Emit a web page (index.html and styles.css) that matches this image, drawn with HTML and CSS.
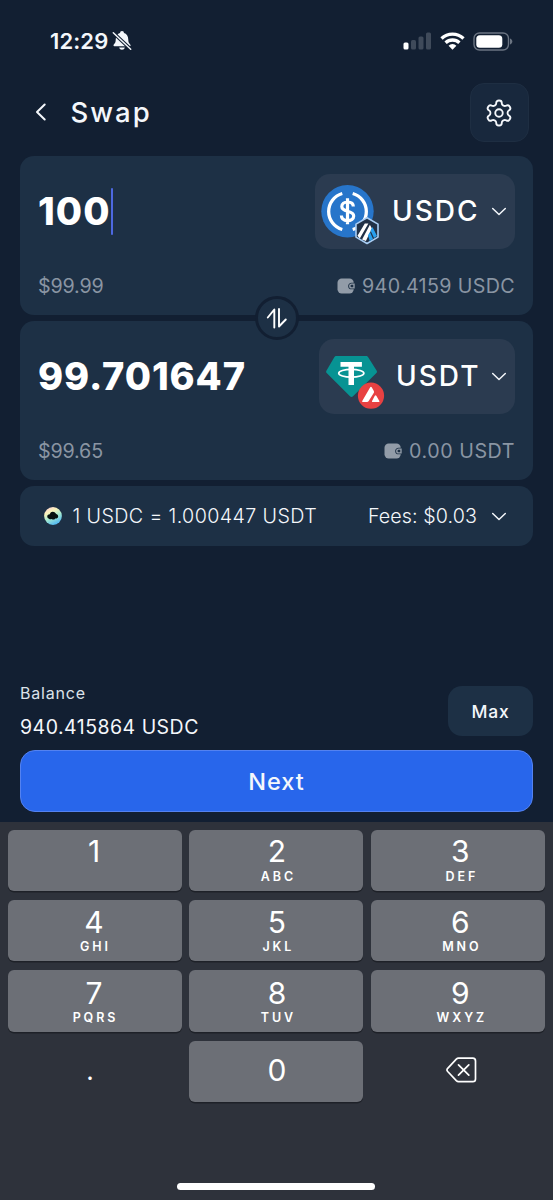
FILE: index.html
```html
<!DOCTYPE html>
<html lang="en">
<head>
<meta charset="utf-8">
<title>Swap</title>
<link rel="stylesheet" href="styles.css">
</head>
<body>
<div class="status">
  <span class="time">12:29</span>
  <svg class="bell" width="20" height="20" viewBox="0 0 20 20"><path d="M1.500 14.500c0-1.400 2.200-2 2.200-5.500C3.700 5 5.500 2.700 8 2.100a2 2 0 0 1 4 0C14.500 2.700 16.300 5 16.300 9c0 3.500 2.300 4.100 2.300 5.500 0 .5-.3.800-.8.800H2.300c-.5 0-.8-.3-.8-.8zM7.200 16.500h5.600c-.3 1.500-1.400 2.200-2.800 2.200s-2.500-.7-2.800-2.200z" fill="#f4f7fb"/><path d="M1 1.500 19 18.500" stroke="#121f32" stroke-width="3.600"/><path d="M1.300 1.800 18.700 18.200" stroke="#f4f7fb" stroke-width="1.500" stroke-linecap="round"/></svg>
  <div class="radios">
    <svg width="29" height="18" viewBox="0 0 29 18"><rect x="0.500" y="10.500" width="5" height="7" rx="1.500" fill="#fff"/><g fill="#3f4a5a"><rect x="8" y="8" width="5" height="9.500" rx="1.500"/><rect x="15.500" y="4.500" width="5" height="13" rx="1.500"/><rect x="23" y="0.500" width="5" height="17" rx="1.500"/></g></svg>
    <svg width="25" height="18" viewBox="0 0 25 18"><g fill="none" stroke="#fff" stroke-width="3.300"><path d="M1.500 6.500a15.800 15.800 0 0 1 22 0"/><path d="M5.600 10.800a9.900 9.900 0 0 1 13.800 0"/></g><path d="M12.500 17.700 8.600 13.700a5.600 5.600 0 0 1 7.800 0z" fill="#fff"/></svg>
    <svg width="40" height="19" viewBox="0 0 40 19"><rect x="1" y="1" width="34.500" height="17" rx="5.500" fill="none" stroke="#6b7482" stroke-width="1.400"/><rect x="3.300" y="3.300" width="26" height="12.400" rx="3.500" fill="#fff"/><path d="M37 6.500c1.500.5 2.300 1.600 2.300 3s-.8 2.500-2.300 3z" fill="#6b7482"/></svg>
  </div>
</div>
<header class="header">
  <svg class="back" width="12" height="18" viewBox="0 0 12 18"><path d="M9.700 1.500 2 9l7.700 7.500" fill="none" stroke="#f4f7fb" stroke-width="2" stroke-linecap="round" stroke-linejoin="round"/></svg>
  <h1 class="title">Swap</h1>
  <button class="settings"><svg width="30" height="30" viewBox="0 0 24 24" fill="none" stroke="#f4f7fb" stroke-width="1.500"><path d="M12.220 2h-.44a2 2 0 0 0-2 2v.18a2 2 0 0 1-1 1.730l-.43.25a2 2 0 0 1-2 0l-.15-.08a2 2 0 0 0-2.730.73l-.22.38a2 2 0 0 0 .73 2.730l.15.1a2 2 0 0 1 1 1.720v.51a2 2 0 0 1-1 1.740l-.15.09a2 2 0 0 0-.73 2.730l.22.38a2 2 0 0 0 2.730.73l.15-.08a2 2 0 0 1 2 0l.43.25a2 2 0 0 1 1 1.730V20a2 2 0 0 0 2 2h.44a2 2 0 0 0 2-2v-.18a2 2 0 0 1 1-1.730l.43-.25a2 2 0 0 1 2 0l.15.08a2 2 0 0 0 2.730-.73l.22-.39a2 2 0 0 0-.73-2.730l-.15-.08a2 2 0 0 1-1-1.740v-.5a2 2 0 0 1 1-1.740l.15-.09a2 2 0 0 0 .73-2.730l-.22-.38a2 2 0 0 0-2.730-.73l-.15.08a2 2 0 0 1-2 0l-.43-.25a2 2 0 0 1-1-1.730V4a2 2 0 0 0-2-2z"/><circle cx="12" cy="12" r="3"/></svg></button>
</header>
<main class="main">
  <section class="card">
    <div class="card-top">
      <div class="amount amount-in">100<span class="caret"></span></div>
      <button class="token token-usdc">
        <svg class="coin" width="60" height="62" viewBox="0 0 60 62">
          <circle cx="26.500" cy="26.200" r="26.200" fill="#2775ca"/>
          <g fill="none" stroke="#fff"><path d="M21.300 8.500a18.700 18.700 0 0 0 0 36M31.700 8.500a18.700 18.700 0 0 1 0 36" stroke-width="3.300"/><path d="M26.500 13.300v26M32.300 21.600c0-3-2.400-4.600-5.700-4.600-3.400 0-5.800 1.700-5.800 4.500 0 6.300 11.900 3.300 11.900 9.600 0 2.800-2.600 4.500-6.100 4.500-3.700 0-6.200-1.800-6.200-5" stroke-width="3.200"/></g>
          <path d="m46 32.800 11 6.300v13l-11 6.400-11-6.400v-13z" fill="#213147" stroke="#a9cdf3" stroke-width="1.600" stroke-linejoin="round"/>
          <path d="m36.500 50.800 7.300-12.300h3.600L38.800 53.500zm4.600 3.700 7.800-14.700 2 3.800-6 12.300z" fill="#fff"/>
          <path d="m49.500 45.500 2-3.400 4.500 9-3 2zM47 50.300l2-3.400 3 7.200-3.300 1.800z" fill="#28a0f0"/>
        </svg>
        <span class="symbol symbol-usdc">USDC</span>
        <svg class="chev" width="16" height="9" viewBox="0 0 16 9"><path d="m1.700 1.500 6.300 6 6.300-6"/></svg>
      </button>
    </div>
    <div class="card-bottom">
      <span class="fiat">$99.99</span>
      <span class="held"><svg width="18" height="16" viewBox="0 0 18 16"><rect x=".5" y=".5" width="16.200" height="15" rx="4.200"/><path class="clasp" d="M18.500 5.400h-4a2.600 2.600 0 0 0 0 5.200h4"/><path class="flap" d="M17 6.100h-2.300a1.900 1.900 0 0 0 0 3.800H17z"/></svg><span class="held-usdc">940.4159 USDC</span></span>
    </div>
    <button class="flip"><svg width="22" height="22" viewBox="0 0 22 22"><path d="m1.800 10.500 6.500-8v18M13 2v17.500l6.800-7" fill="none" stroke="#fff" stroke-width="1.900" stroke-linejoin="round" stroke-linecap="round"/></svg></button>
  </section>
  <section class="card">
    <div class="card-top">
      <div class="amount amount-out">99.701647</div>
      <button class="token token-usdt">
        <svg class="coin" width="60" height="62" viewBox="0 0 60 62">
          <path d="M11.500 6h29.500c1 0 1.700.3 2.200 1.200l8.500 13.500c.5.900.4 1.700-.3 2.400L28 46.300c-1 .9-2 .9-3 0L1.700 23.100c-.7-.7-.8-1.500-.3-2.400l7.900-13.500C9.800 6.300 10.500 6 11.500 6z" fill="#079393"/>
          <path d="M15.500 12h21.400v4.700H29v18.200h-5.500V16.700h-8z" fill="#fff"/><ellipse cx="26.300" cy="23.300" rx="12.600" ry="3.900" fill="none" stroke="#fff" stroke-width="1.700"/>
          <circle cx="46" cy="45.700" r="13.100" fill="#e84142"/>
          <path d="M45.200 37.300c.5-.8 1-.8 1.500 0l2 3.400c.5.900.5 1.500 0 2.300l-5 8.100c-.4.700-.9 1-1.700 1h-3.800c-1 0-1.300-.6-.8-1.400zM49.800 45.800c.5-.8 1-.8 1.500 0l2.900 4.900c.5.900.2 1.400-.7 1.400H48c-1 0-1.300-.6-.8-1.400z" fill="#fff"/>
        </svg>
        <span class="symbol symbol-usdt">USDT</span>
        <svg class="chev" width="16" height="9" viewBox="0 0 16 9"><path d="m1.700 1.500 6.300 6 6.300-6"/></svg>
      </button>
    </div>
    <div class="card-bottom">
      <span class="fiat">$99.65</span>
      <span class="held"><svg width="18" height="16" viewBox="0 0 18 16"><rect x=".5" y=".5" width="16.200" height="15" rx="4.200"/><path class="clasp" d="M18.500 5.400h-4a2.600 2.600 0 0 0 0 5.200h4"/><path class="flap" d="M17 6.100h-2.300a1.900 1.900 0 0 0 0 3.800H17z"/></svg><span class="held-usdt">0.00 USDT</span></span>
    </div>
  </section>
  <section class="rate">
    <svg width="18" height="18" viewBox="0 0 18 18"><defs><linearGradient id="sky" x1="0" y1="0" x2=".5" y2="1"><stop offset="0" stop-color="#ffc9dc"/><stop offset=".35" stop-color="#fbf3ba"/><stop offset=".65" stop-color="#a5ead0"/><stop offset="1" stop-color="#58bdf0"/></linearGradient></defs><circle cx="9" cy="9" r="8.900" fill="url(#sky)"/><path d="M5 11.800a2.200 2.200 0 0 1-.4-4.200c.6-.2 1-.2 1.200-.7a3.300 3.300 0 0 1 6-.3c.2.500.6.500 1 .7a2.200 2.200 0 0 1 .2 4c-.6.300-1.300.2-1.800.1-.8 1.400-2.600 1.500-3.400.5-.8.500-2 .600-2.800-.1z" fill="#06100f"/></svg>
    <span class="pair">1 USDC = 1.000447 USDT</span>
    <span class="fees">Fees: $0.03</span>
    <svg class="chev" width="16" height="9" viewBox="0 0 16 9"><path d="m1.700 1.500 6.300 6 6.300-6"/></svg>
  </section>
</main>
<footer class="footer">
  <div class="balance-row">
    <div class="balance"><div class="label">Balance</div><div class="value">940.415864 USDC</div></div>
    <button class="max">Max</button>
  </div>
  <button class="next">Next</button>
</footer>
<div class="keyboard">
  <div class="keys">
    <div class="key first"><b>1</b></div>
    <div class="key first"><b>2</b><i>ABC</i></div>
    <div class="key first"><b>3</b><i>DEF</i></div>
    <div class="key"><b>4</b><i>GHI</i></div>
    <div class="key"><b>5</b><i>JKL</i></div>
    <div class="key"><b>6</b><i>MNO</i></div>
    <div class="key"><b>7</b><i>PQRS</i></div>
    <div class="key"><b>8</b><i>TUV</i></div>
    <div class="key"><b>9</b><i>WXYZ</i></div>
    <div class="key plain point"><b>.</b></div>
    <div class="key zero"><b>0</b></div>
    <div class="key plain erase"><svg width="31" height="26" viewBox="0 0 31 26" fill="none" stroke="#fff" stroke-width="1.700" stroke-linejoin="round" stroke-linecap="round"><path d="M12.500 1.200h14.300c1.700 0 2.700 1 2.700 2.700v18c0 1.700-1 2.700-2.700 2.700H12.500c-.9 0-1.500-.3-2.200-1L1.700 14.500c-.9-1-.9-2.200 0-3.200l8.600-9.100c.7-.7 1.300-1 2.200-1zM12.500 7.800l10.300 10.400M22.800 7.800 12.500 18.200"/></svg></div>
  </div>
  <div class="home"></div>
</div>
</body>
</html>
```
FILE: styles.css
```css
* { box-sizing: border-box; }
body {
  margin: 0;
  width: 553px;
  height: 1200px;
  display: flex;
  flex-direction: column;
  overflow: hidden;
  background: #121f32;
  color: #f4f7fb;
  font-family: Inter, "Liberation Sans", sans-serif;
  white-space: nowrap;
}
button {
  margin: 0;
  padding: 0;
  border: 0;
  color: inherit;
  font: inherit;
}
svg { display: block; flex: none; }

.status {
  height: 83px;
  padding: 0 40px 1px 50px;
  display: flex;
  align-items: center;
}
.time { font-size: 22px; font-weight: 600; line-height: 26px; letter-spacing: 0.1px; width: 62px; }
.radios { margin-left: auto; display: flex; align-items: center; gap: 8px; }

.header {
  height: 59px;
  padding: 0 24px 0 35px;
  display: flex;
  align-items: center;
}
.back { margin-bottom: 1px; }
.title {
  margin: 0 0 1px 23.500px;
  font-size: 27.500px;
  font-weight: 450;
  line-height: 34px;
  letter-spacing: 2px;
}
.settings {
  margin-left: auto;
  width: 59px;
  height: 59px;
  padding-right: 1px;
  border-radius: 14px;
  background: #18283d;
  border: 1px solid #1e2e42;
  display: flex;
  align-items: center;
  justify-content: center;
}

.main { padding: 14px 20px 0; display: flex; flex-direction: column; gap: 6px; }
.card {
  position: relative;
  height: 159px;
  padding: 17.500px 18px 0;
  border-radius: 14px;
  background: #1d3045;
}
.card-top { height: 75px; display: flex; align-items: center; justify-content: space-between; }
.amount { font-size: 38px; font-weight: 800; line-height: 46px; color: #fff; display: flex; }
.amount-in { letter-spacing: 1.100px; }
.amount-out { letter-spacing: 0.900px; }
.caret { width: 2.500px; height: 47px; background: #4d68e0; border-radius: 1px; }
.token {
  height: 75px;
  padding: 0 8px 0 6px;
  border-radius: 15px;
  background: #2b3b50;
  display: flex;
  align-items: center;
}
.token-usdc { width: 200px; }
.token-usdt { width: 196px; }
.coin { margin-top: 10px; }
.symbol { font-size: 28px; font-weight: 550; line-height: 34px; color: #fff; text-align: left; letter-spacing: 2px; }
.symbol-usdc { margin-left: 11px; }
.symbol-usdt { margin-left: 11px; }
.token .chev { margin-left: auto; }
.chev { fill: none; stroke: #f4f7fb; stroke-width: 1.500px; stroke-linecap: round; stroke-linejoin: round; }
.card-bottom {
  margin-top: 25px;
  height: 24px;
  display: flex;
  align-items: center;
  justify-content: space-between;
  font-size: 19.700px;
  line-height: 24px;
  color: #8a95a3;
}
.fiat { letter-spacing: -0.150px; }
.held { display: flex; align-items: center; gap: 7px; }
.held svg { fill: #929ca8; }
.held .clasp { fill: #1d3045; stroke: #1d3045; stroke-width: 1.500px; }
.held .flap { fill: #1d3045; stroke: #929ca8; stroke-width: 1.400px; }
.held-usdc { letter-spacing: 0.350px; }
.held-usdt { letter-spacing: 0.550px; }
.flip {
  position: absolute;
  z-index: 1;
  left: 235px;
  top: 139.500px;
  width: 44px;
  height: 44px;
  border: 3px solid #121f32;
  border-radius: 50%;
  background: #1d3045;
  display: flex;
  align-items: center;
  justify-content: center;
}
.rate {
  height: 60px;
  padding: 0 26px 0 24px;
  border-radius: 14px;
  background: #1d3045;
  display: flex;
  align-items: center;
  font-size: 19.700px;
  font-weight: 300;
}
.pair { margin-left: 10.500px; letter-spacing: 0.380px; }
.fees { margin-left: auto; margin-right: 14px; letter-spacing: 0.080px; }

.footer { margin-top: auto; padding: 0 20px 10px; }
.balance-row { height: 50px; display: flex; justify-content: space-between; }
.label { margin-top: -3px; font-size: 16px; line-height: 20px; color: #dce2ea; letter-spacing: 0.800px; }
.value { margin-top: 12px; font-size: 19.500px; line-height: 24px; letter-spacing: 0.480px; }
.max { width: 85px; height: 50px; border-radius: 14px; background: #1d3045; font-size: 17.500px; font-weight: 450; letter-spacing: 0.700px; }
.next {
  display: block;
  margin-top: 14px;
  width: 513px;
  height: 62px;
  border-radius: 15px;
  border: 1.500px solid #5482f0;
  background: #2866eb;
  font-size: 23.500px;
  font-weight: 500;
  letter-spacing: 1px;
}

.keyboard { height: 378px; padding: 7.500px 8px 0 7.500px; background: #2e323b; }
.keys {
  display: grid;
  grid-template-columns: repeat(3, 174px);
  grid-auto-rows: 61.500px;
  gap: 8.900px 7.700px;
}
.key {
  padding-top: 4.500px;
  border-radius: 6px;
  background: #6c6f76;
  box-shadow: 0 1.500px 0 #1e2128;
  display: flex;
  flex-direction: column;
  align-items: center;
  color: #fff;
}
.first { padding-top: 3.500px; }
.first i { margin-top: 0.500px; }
.key:nth-child(3n+1) { padding-right: 1px; }
.key:nth-child(3n+2) { padding-left: 1.500px; }
.key:nth-child(3n) { padding-left: 5px; }
.key b { font-size: 30px; font-weight: 400; line-height: 36px; }
.key i { font-size: 12.500px; font-style: normal; font-weight: 600; line-height: 14px; letter-spacing: 2.900px; margin-right: -2.900px; }
.plain { background: none; box-shadow: none; }
.key.point { padding: 12px 9px 0 0; }
.key.point b { font-size: 26px; }
.zero { padding-top: 11px; }
.key.erase { padding: 16.500px 0 0 8px; }
.home { margin: 81px auto 0; width: 198px; height: 7px; border-radius: 4px; background: #fff; }
```
